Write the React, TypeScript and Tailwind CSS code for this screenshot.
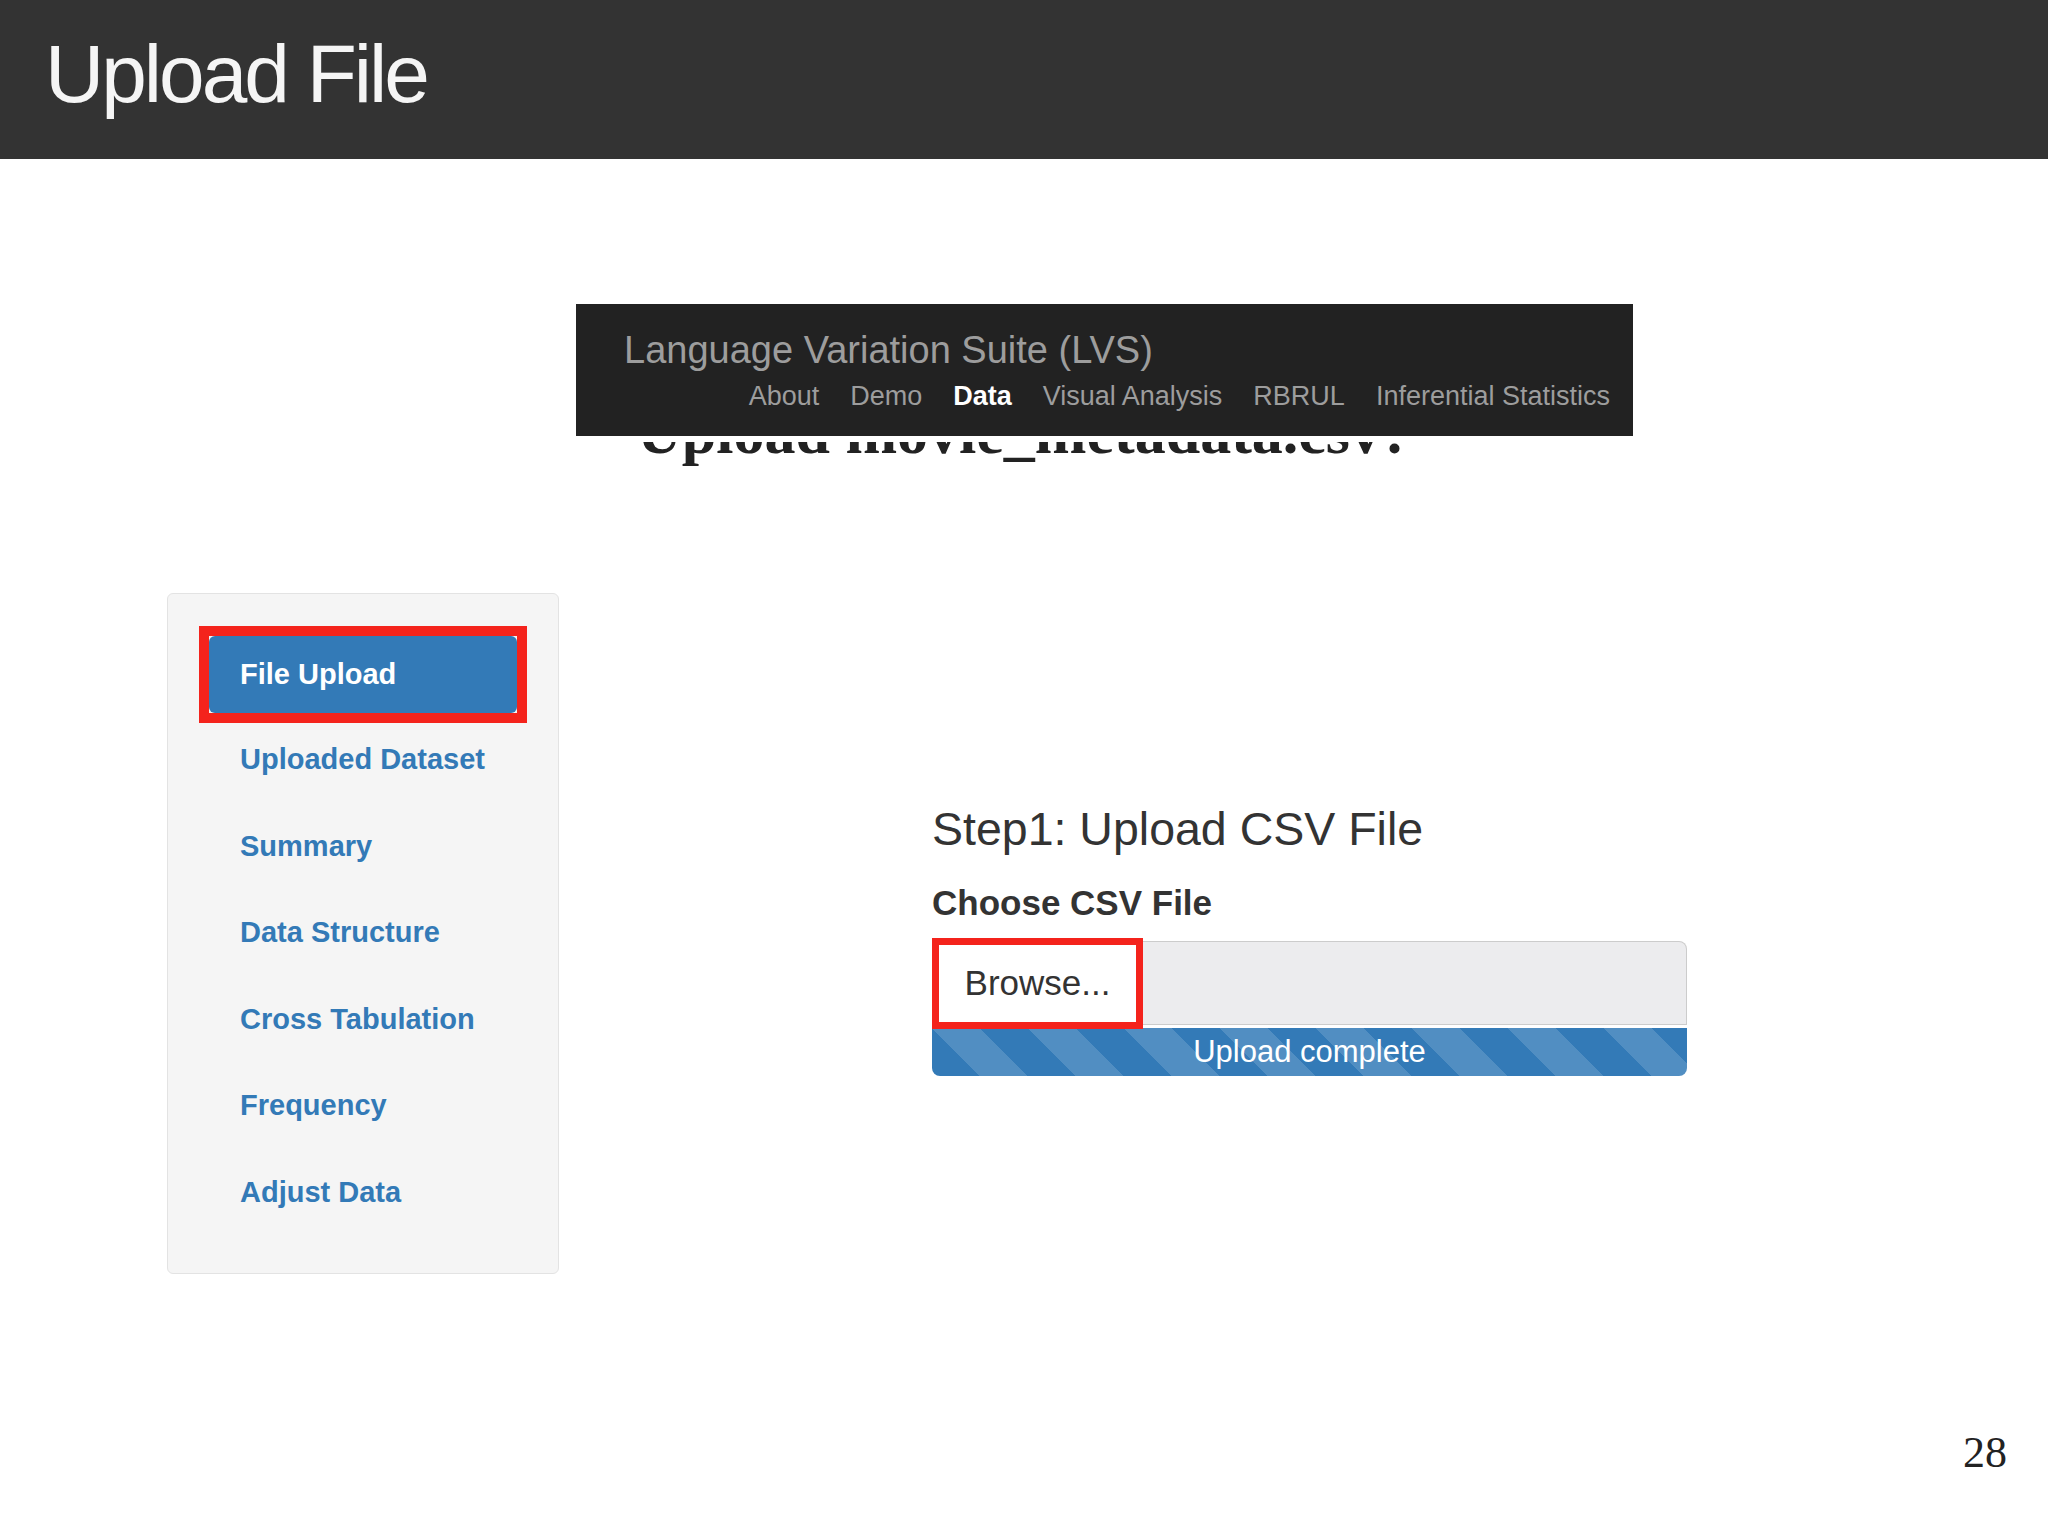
const navLinks = ['About', 'Demo', 'Data', 'Visual Analysis', 'RBRUL', 'Inferential Statistics']

const menuItems = [
  'File Upload',
  'Uploaded Dataset',
  'Summary',
  'Data Structure',
  'Cross Tabulation',
  'Frequency',
  'Adjust Data',
]

function TopNav() {
  return (
    <div className="ml-[576px] mt-[145px] h-[132px] w-[1057px] bg-[#222222] pt-[24px] relative z-10">
      <div className="h-[44px] pl-[48px] text-[38px] leading-[44px] text-[#9d9d9d]">
        Language Variation Suite (LVS)
      </div>
      <div className="mt-[6px] flex h-[36px] items-center justify-end gap-[31px] pr-[23px] text-[27px] leading-[36px]">
        {navLinks.map((link) => (
          <span
            key={link}
            className={link === 'Data' ? 'font-bold text-white' : 'text-[#9d9d9d]'}
          >
            {link}
          </span>
        ))}
      </div>
    </div>
  )
}

function SideMenu() {
  return (
    <div className="h-[681px] w-[392px] shrink-0 rounded-[6px] border border-[#e3e3e3] bg-[#f5f5f5] px-[41px] pt-[42px]">
      <div className="flex flex-col gap-[7.5px]">
        {menuItems.map((item, i) =>
          i === 0 ? (
            <div key={item} className="-m-[10px] border-[10px] border-[#f4231c]">
              <div className="flex h-[77px] items-center rounded-[6px] bg-[#337ab7] pl-[31px] text-[29px] font-bold text-white">
                {item}
              </div>
            </div>
          ) : (
            <div
              key={item}
              className="flex h-[79px] items-center pl-[31px] text-[29px] font-bold text-[#337ab7]"
            >
              {item}
            </div>
          )
        )}
      </div>
    </div>
  )
}

function UploadPanel() {
  return (
    <div className="ml-[373px] w-[755px] pt-[208px] text-[#333333]">
      <h3 className="h-[56px] text-[46.5px] leading-[56px]">Step1: Upload CSV File</h3>
      <div className="mt-[26px] h-[40px] text-[35px] font-bold leading-[40px]">Choose CSV File</div>
      <div className="mt-[18px] flex h-[84px] items-center">
        <div className="flex h-[91px] w-[211px] shrink-0 items-center justify-center border-[7px] border-[#f4231c] bg-white text-[35px]">
          Browse...
        </div>
        <div className="h-full flex-1 rounded-tr-[8px] border border-l-0 border-[#cccccc] bg-[#ececee]" />
      </div>
      <div className="mt-[3px] flex h-[48px] items-center justify-center rounded-b-[8px] bg-[#337ab7] bg-[linear-gradient(45deg,rgba(255,255,255,.15)_25%,transparent_25%,transparent_50%,rgba(255,255,255,.15)_50%,rgba(255,255,255,.15)_75%,transparent_75%,transparent)] bg-[length:96px_96px] text-[31px] text-white">
        Upload complete
      </div>
    </div>
  )
}

export default function App() {
  return (
    <div className="h-[1536px] w-[2048px] overflow-hidden bg-white font-['Liberation_Sans',Arial,sans-serif]">
      <div className="h-[159px] bg-[#333333] pl-[45px] pt-[33px]">
        <h1 className="text-[82px] leading-[82px] tracking-[-3px] text-[#f5f5f5]">Upload File</h1>
      </div>

      <TopNav />

      {/* heading of the page underneath, mostly hidden by the navbar */}
      <div className="ml-[637px] mt-[6px] h-[27px] overflow-hidden">
        <div className="-mt-[41px] font-['Liberation_Serif',serif] text-[62px] font-bold leading-[62px] text-[#222222]">
          Upload movie_metadata.csv?
        </div>
      </div>

      <div className="mt-[124px] flex items-start pl-[167px]">
        <SideMenu />
        <UploadPanel />
      </div>

      <div className="mt-[155px] flex justify-end pr-[41px]">
        <span className="font-['Liberation_Serif',serif] text-[44px] leading-[48px] text-[#222222]">28</span>
      </div>
    </div>
  )
}
